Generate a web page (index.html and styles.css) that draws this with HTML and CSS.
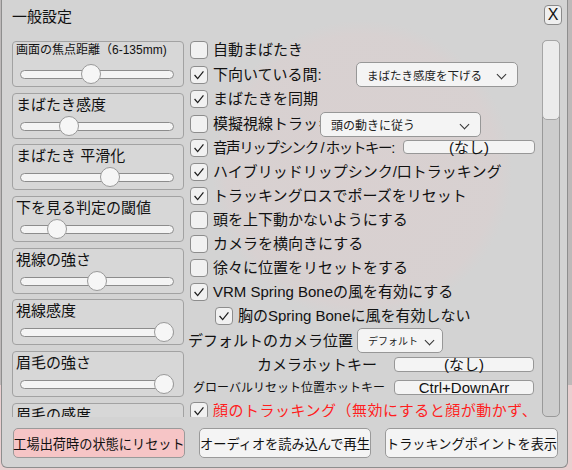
FILE: index.html
```html
<!DOCTYPE html>
<html>
<head>
    <meta charset="UTF-8">
    <title>一般設定</title>
    <link rel="stylesheet" href="styles.css">
</head>
<body>
    <div class="panel">
        <div class="head">
            <span class="head-title">一般設定</span>
            <span class="close">X</span>
        </div>
        <div class="main">
            <div class="sliders">
                <div class="group">
                    <div class="group-label small">画面の焦点距離（6-135mm)</div>
                    <div class="track"><span class="thumb" style="--v:0.455"></span></div>
                </div>
                <div class="group">
                    <div class="group-label">まばたき感度</div>
                    <div class="track"><span class="thumb" style="--v:0.29"></span></div>
                </div>
                <div class="group">
                    <div class="group-label">まばたき 平滑化</div>
                    <div class="track"><span class="thumb" style="--v:0.6"></span></div>
                </div>
                <div class="group">
                    <div class="group-label">下を見る判定の閾値</div>
                    <div class="track"><span class="thumb" style="--v:0.2"></span></div>
                </div>
                <div class="group">
                    <div class="group-label">視線の強さ</div>
                    <div class="track"><span class="thumb" style="--v:0.5"></span></div>
                </div>
                <div class="group">
                    <div class="group-label">視線感度</div>
                    <div class="track"><span class="thumb" style="--v:1"></span></div>
                </div>
                <div class="group">
                    <div class="group-label">眉毛の強さ</div>
                    <div class="track"><span class="thumb" style="--v:1"></span></div>
                </div>
                <div class="group">
                    <div class="group-label">眉毛の感度</div>
                    <div class="track"><span class="thumb" style="--v:0.5"></span></div>
                </div>
            </div>

            <div class="options">
                <div class="row">
                    <span class="check"></span>
                    <span class="text">自動まばたき</span>
                </div>
                <div class="row tall">
                    <span class="check on"><svg viewBox="0 0 18 18"><polyline points="4,9 7.5,13 14,5"/></svg></span>
                    <span class="text w-look">下向いている間:</span>
                    <span class="select s-blink">まばたき感度を下げる<i class="chev"></i></span>
                </div>
                <div class="row">
                    <span class="check on"><svg viewBox="0 0 18 18"><polyline points="4,9 7.5,13 14,5"/></svg></span>
                    <span class="text">まばたきを同期</span>
                </div>
                <div class="row tall">
                    <span class="check"></span>
                    <span class="text w-gaze">模擬視線トラッキング</span>
                    <span class="select s-gaze">頭の動きに従う<i class="chev"></i></span>
                </div>
                <div class="row">
                    <span class="check on"><svg viewBox="0 0 18 18"><polyline points="4,9 7.5,13 14,5"/></svg></span>
                    <span class="text w-lip">音声リップシンク / ホットキー:</span>
                    <span class="key k-lip">(なし)</span>
                </div>
                <div class="row">
                    <span class="check on"><svg viewBox="0 0 18 18"><polyline points="4,9 7.5,13 14,5"/></svg></span>
                    <span class="text">ハイブリッドリップシンク/口トラッキング</span>
                </div>
                <div class="row">
                    <span class="check on"><svg viewBox="0 0 18 18"><polyline points="4,9 7.5,13 14,5"/></svg></span>
                    <span class="text">トラッキングロスでポーズをリセット</span>
                </div>
                <div class="row">
                    <span class="check"></span>
                    <span class="text">頭を上下動かないようにする</span>
                </div>
                <div class="row">
                    <span class="check"></span>
                    <span class="text">カメラを横向きにする</span>
                </div>
                <div class="row">
                    <span class="check"></span>
                    <span class="text">徐々に位置をリセットをする</span>
                </div>
                <div class="row">
                    <span class="check on"><svg viewBox="0 0 18 18"><polyline points="4,9 7.5,13 14,5"/></svg></span>
                    <span class="text">VRM Spring Boneの風を有効にする</span>
                </div>
                <div class="row sub">
                    <span class="check on"><svg viewBox="0 0 18 18"><polyline points="4,9 7.5,13 14,5"/></svg></span>
                    <span class="text">胸のSpring Boneに風を有効しない</span>
                </div>
                <div class="row tall">
                    <span class="text plain">デフォルトのカメラ位置</span>
                    <span class="select s-cam">デフォルト<i class="chev"></i></span>
                </div>
                <div class="row hot">
                    <span class="hot-label l-cam">カメラホットキー</span>
                    <span class="key">(なし)</span>
                </div>
                <div class="row hot">
                    <span class="hot-label l-reset">グローバルリセット位置ホットキー</span>
                    <span class="key">Ctrl+DownArr</span>
                </div>
                <div class="row">
                    <span class="check on"><svg viewBox="0 0 18 18"><polyline points="4,9 7.5,13 14,5"/></svg></span>
                    <span class="text warn">顔のトラッキング（無効にすると顔が動かず、</span>
                </div>
            </div>

            <div class="scroll">
                <div class="scroll-thumb"></div>
            </div>
        </div>
        <div class="foot">
            <button class="btn btn-reset">工場出荷時の状態にリセット</button>
            <button class="btn">オーディオを読み込んで再生</button>
            <button class="btn wide">トラッキングポイントを表示</button>
        </div>
    </div>
</body>
</html>
```

FILE: styles.css
```css
* {
  margin: 0px;
  padding: 0px;
  box-sizing: border-box;
}
html, body {
  height: 100%;
}
body {
  background: linear-gradient(#bdb9b9 0, #bdb9b9 385px, #e9cfd0 385px);
  font-family: "Liberation Sans", "Noto Sans CJK JP", sans-serif;
  color: #111;
  overflow: hidden;
}
.panel {
  width: 567px;
  height: 468px;
  margin-left: 1px;
  border: 1px solid #8e8e8e;
  border-top: none;
  border-radius: 0px 0px 6px 6px;
  background: radial-gradient(circle at 360px 170px, rgba(226, 204, 204, .4) 0px, rgba(226, 204, 204, .3) 135px, rgba(211, 211, 211, 0) 150px), #d3d3d3;
  overflow: hidden;
}
.head {
  height: 38px;
  display: flex;
  justify-content: space-between;
  align-items: flex-start;
}
.head-title {
  padding: 7px 0px 0px 10px;
  font-size: 15px;
  line-height: 20px;
}
.close {
  width: 18px;
  height: 20px;
  margin: 5px 5px 0px 0px;
  background: #efefef;
  border: 1px solid #8a8a8a;
  border-radius: 4px;
  font-size: 16px;
  line-height: 18px;
  text-align: center;
}
.main {
  height: 379px;
  display: flex;
  padding-left: 10px;
  overflow: hidden;
}
.sliders {
  width: 172px;
  flex-shrink: 0;
  padding-top: 3px;
  display: flex;
  flex-direction: column;
  gap: 5.7px;
}
.group {
  height: 46px;
  flex-shrink: 0;
  border: 1px solid #a2a2a2;
  border-radius: 4px;
  background: rgba(220, 220, 220, .5);
}
.group-label {
  height: 21px;
  padding-left: 3px;
  font-size: 15px;
  line-height: 21px;
  white-space: nowrap;
}
.group-label.small {
  font-size: 12px;
  line-height: 17px;
  height: 21px;
}
.track {
  position: relative;
  height: 9px;
  margin: 7px 9px 0px 7px;
  background: #f4f4f4;
  border: 1px solid #8c8c8c;
  border-radius: 5px;
}
.thumb {
  position: absolute;
  top: -7px;
  left: calc(var(--v) * (100% - 18px) - 1px);
  width: 20px;
  height: 20px;
  background: #f6f6f6;
  border: 1px solid #9a9a9a;
  border-radius: 50%;
}
.options {
  width: 350px;
  flex-shrink: 0;
  margin-left: 6px;
}
.row {
  height: 24px;
  display: flex;
  align-items: center;
  white-space: nowrap;
  font-size: 15px;
}
.row.tall {
  height: 25px;
}
.row.hot {
  height: 23px;
}
.row.sub {
  padding-left: 25px;
}
.check {
  width: 18px;
  height: 18px;
  flex-shrink: 0;
  background: #f1f1f1;
  border: 1px solid #8d8d8d;
  border-radius: 4px;
}
.check svg {
  display: block;
  width: 16px;
  height: 16px;
}
.check polyline {
  fill: none;
  stroke: #1d1d1d;
  stroke-width: 1.4;
}
.text {
  margin-left: 5px;
  line-height: 20px;
}
.text.plain {
  margin-left: -2px;
}
.text.warn {
  color: #ff1e1e;
  letter-spacing: 0.5px;
}
.w-look {
  width: 143px;
  flex-shrink: 0;
}
.w-gaze {
  width: 107px;
  flex-shrink: 0;
  overflow: hidden;
}
.w-lip {
  width: 188px;
  flex-shrink: 0;
  font-size: 14.5px;
  letter-spacing: -1.4px;
}
.select {
  position: relative;
  height: 25px;
  display: flex;
  align-items: center;
  flex-shrink: 0;
  padding-left: 10px;
  background: #f4f4f4;
  border: 1px solid #979797;
  border-radius: 5px;
  font-size: 11.5px;
  color: #222;
}
.s-blink {
  width: 162px;
}
.s-gaze {
  width: 161px;
  margin-top: 2px;
  font-size: 12px;
}
.s-cam {
  width: 86px;
  margin-left: 4px;
  font-size: 10px;
}
.chev {
  position: absolute;
  right: 12px;
  top: 8px;
  width: 7px;
  height: 7px;
  border-right: 1.4px solid #333;
  border-bottom: 1.4px solid #333;
  transform: rotate(45deg);
}
.s-cam .chev {
  right: 9px;
}
.key {
  width: 140px;
  height: 15px;
  flex-shrink: 0;
  background: #f4f4f4;
  border: 1px solid #979797;
  border-radius: 4px;
  font-size: 15px;
  line-height: 14px;
  text-align: center;
}
.k-lip {
  width: 132px;
  height: 14px;
  margin-left: 2px;
  margin-top: -2px;
}
.hot-label {
  width: 204px;
  flex-shrink: 0;
  text-align: right;
  line-height: 20px;
}
.l-cam {
  padding-right: 17px;
}
.l-reset {
  padding-right: 9px;
  font-size: 12px;
}
.scroll {
  width: 18px;
  height: 377px;
  flex-shrink: 0;
  margin: 2px 0px 0px 2px;
  border: 1px solid #999;
  border-radius: 5px;
  background: #cdcdcd;
}
.scroll-thumb {
  height: 80px;
  margin: -1px;
  background: #ebebeb;
  border: 1px solid #a5a5a5;
  border-radius: 5px;
}
.foot {
  display: flex;
  gap: 14px;
  padding: 11px 0px 0px 11px;
}
.btn {
  width: 172px;
  height: 30px;
  background: #f4f4f4;
  border: 1px solid #9a9a9a;
  border-radius: 5px;
  font-family: "Liberation Sans", "Noto Sans CJK JP", sans-serif;
  font-size: 13.2px;
  color: #111;
  white-space: nowrap;
  overflow: visible;
  padding: 0px;
  display: flex;
  justify-content: center;
  align-items: center;
}
.btn.wide {
  width: 173px;
}
.btn-reset {
  background: #f6c5c6;
}
```
